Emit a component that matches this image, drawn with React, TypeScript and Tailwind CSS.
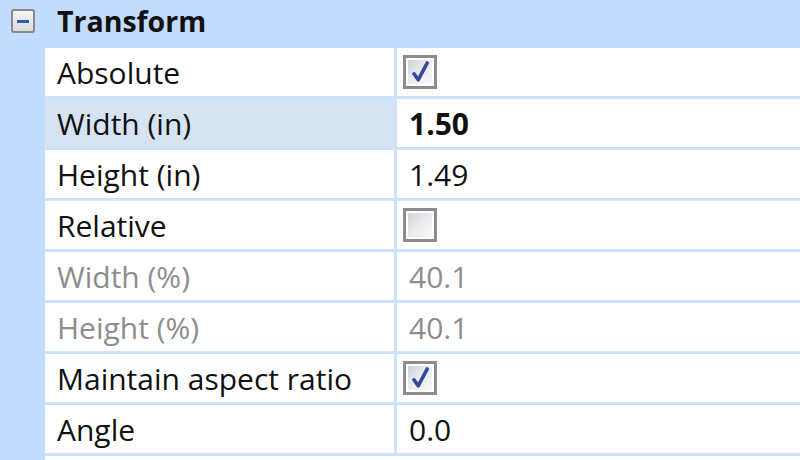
import React from "react";

type Row = {
  label: string;
  value?: string;
  check?: boolean;
  disabled?: boolean;
  selected?: boolean;
  bold?: boolean;
};

const rows: Row[] = [
  { label: "Absolute", check: true },
  { label: "Width (in)", value: "1.50", selected: true, bold: true },
  { label: "Height (in)", value: "1.49" },
  { label: "Relative", check: false },
  { label: "Width (%)", value: "40.1", disabled: true },
  { label: "Height (%)", value: "40.1", disabled: true },
  { label: "Maintain aspect ratio", check: true },
  { label: "Angle", value: "0.0" },
];

const CheckBox = ({ checked }: { checked: boolean }) => (
  <div className="w-[34px] h-[34px] border-[3px] border-[#8c8c8c] bg-white p-[2px]">
    <div className="relative w-full h-full bg-gradient-to-br from-[#cdd1d7] via-[#eaecef] to-[#f7f8f9]">
      {checked && (
        <svg viewBox="0 0 20 20" className="absolute inset-0 w-full h-full">
          <path d="M5 11.5 L8.5 16.5 L16 2.5" fill="none" stroke="#3548a0" strokeWidth="3" strokeLinecap="round" strokeLinejoin="round" />
        </svg>
      )}
    </div>
  </div>
);

export default function App() {
  return (
    <div className="w-[800px] h-[460px] overflow-hidden bg-white font-['Open_Sans','Noto_Sans',sans-serif] text-[30px] text-[#111]">
      <div className="flex items-center h-[48px] bg-[#c1dcfd]">
        <div className="w-[45px] flex justify-center pb-[6px]">
          <div className="w-[24px] h-[24px] rounded-[3px] border-2 border-[#8a8a8a] bg-gradient-to-b from-[#f6f6f6] to-[#d9d9d9] flex items-center justify-center">
            <div className="w-[12px] h-[3px] bg-[#3b57b8]" />
          </div>
        </div>
        <span className="pl-[12px] pb-[6px] font-bold text-[28.5px]">Transform</span>
      </div>
      <div className="flex">
        <div className="w-[45px] bg-[#c1dcfd] h-[420px]" />
        <div className="flex-1">
          {rows.map((r) => (
            <div key={r.label} className="flex h-[51px] border-b-[3px] border-[#cfe2fb]">
              <div
                className={`w-[352px] flex items-center pl-[12px] border-r-[3px] border-[#cfe2fb] ${
                  r.selected ? "bg-[#d5e3f2]" : "bg-white"
                } ${r.disabled ? "text-[#8d8d8d]" : ""}`}
              >
                {r.label}
              </div>
              <div className={`flex-1 flex items-center ${r.check !== undefined ? "pl-[6px]" : "pl-[12px]"} ${r.disabled ? "text-[#8d8d8d]" : ""} ${r.bold ? "font-bold" : ""}`}>
                {r.check !== undefined ? <CheckBox checked={r.check} /> : r.value}
              </div>
            </div>
          ))}
        </div>
      </div>
    </div>
  );
}
